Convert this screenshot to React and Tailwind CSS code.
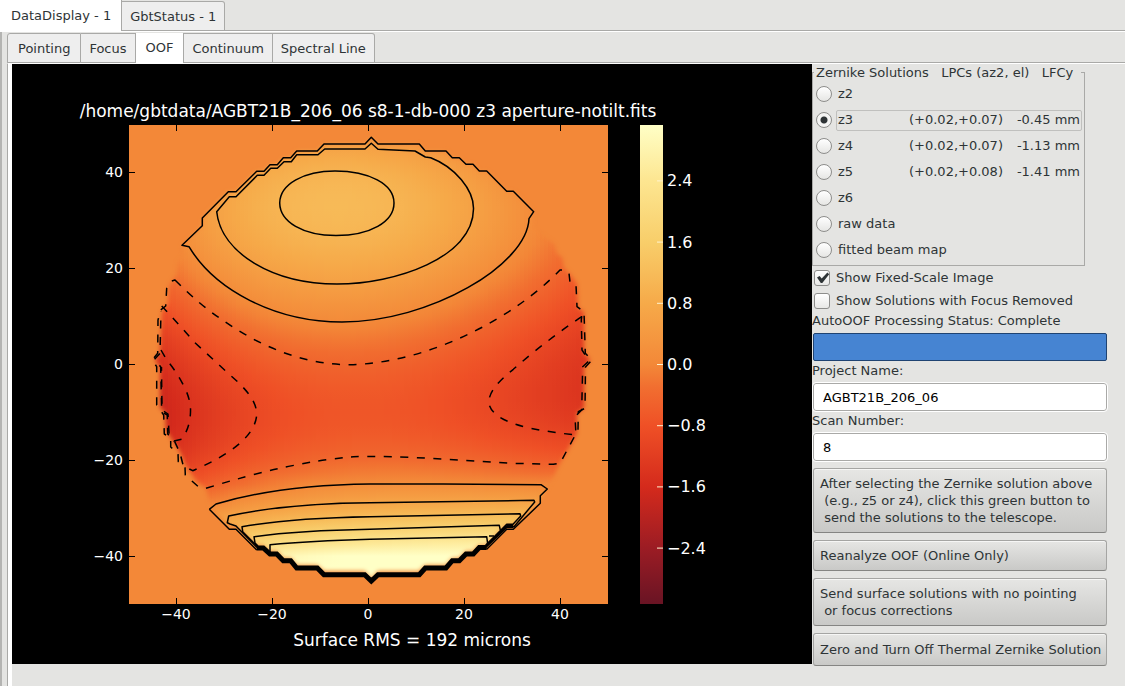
import React, { useState } from 'react';
import { clsx } from 'clsx';

const MAIN_TABS = ['DataDisplay - 1', 'GbtStatus - 1'];
const SUB_TABS = ['Pointing', 'Focus', 'OOF', 'Continuum', 'Spectral Line'];

const SOLUTIONS = [
  { id: 'z2' },
  { id: 'z3', lpc: '(+0.02,+0.07)', lfc: '-0.45 mm' },
  { id: 'z4', lpc: '(+0.02,+0.07)', lfc: '-1.13 mm' },
  { id: 'z5', lpc: '(+0.02,+0.08)', lfc: '-1.41 mm' },
  { id: 'z6' },
  { id: 'raw data' },
  { id: 'fitted beam map' }
];

const COLOR_MAP = [
  [-3.12, [105, 20, 36]],
  [-2.4, [155, 28, 36]],
  [-1.6, [212, 42, 28]],
  [-0.8, [239, 80, 38]],
  [-0.3, [241, 110, 48]],
  [0, [243, 136, 56]],
  [0.8, [246, 170, 73]],
  [1.6, [248, 206, 106]],
  [2.4, [253, 230, 145]],
  [3.12, [255, 255, 198]]
];

const X_TICKS = [-40, -20, 0, 20, 40];
const Y_TICKS = [-40, -20, 0, 20, 40];
const BAR_TICKS = [2.4, 1.6, 0.8, 0, -0.8, -1.6, -2.4];

const toX = (x) => 368 + x * 4.8;
const toY = (y) => 364 - y * 4.8;
const barY = (v) => 364 - v * 76.5;

const tickLabel = (v, digits) => `${v < 0 ? '−' : ''}${Math.abs(v).toFixed(digits)}`;

const colorFor = (value) => {
  const last = COLOR_MAP[COLOR_MAP.length - 1];
  if (value <= COLOR_MAP[0][0]) return `rgb(${COLOR_MAP[0][1].join(',')})`;
  if (value >= last[0]) return `rgb(${last[1].join(',')})`;
  const i = COLOR_MAP.findIndex(([stop]) => stop > value);
  const [v0, c0] = COLOR_MAP[i - 1];
  const [v1, c1] = COLOR_MAP[i];
  const k = (value - v0) / (v1 - v0);
  return `rgb(${c0.map((c, n) => Math.round(c + (c1[n] - c) * k)).join(',')})`;
};

// Third order surface, x and y in metres on the dish
const surface = (x, y) => {
  const s = x / 10;
  const t = y / 10;
  return (
    -0.45 - 0.137 * (t ** 3 / 3 - 1.15 * t ** 2 - 3.3 * t) +
    s * (-0.0435 - 0.028 * t + 0.0035 * t ** 2) +
    s ** 2 * (-0.0505 - 0.0063 * t) +
    0.0035 * s ** 3
  );
};

const COLUMN_WIDTH = 4;
const columns = [];
for (let px = 148; px < 596; px += COLUMN_WIDTH) {
  const stops = [];
  for (let py = 136; py <= 580; py += 12) {
    stops.push(colorFor(surface((px + COLUMN_WIDTH / 2 - 368) / 4.8, (364 - py) / 4.8)));
  }
  columns.push({ px, stops });
}

const RIM_TOP =
  '202.3,225.7 202.3,218 228.3,191.7 236,191.7 256.7,171.3 264,171.3 270,164.7 277.3,164.7 283.3,157.7 290.7,157.7 296.7,151 317.3,151 324,144 365,144 371.3,137.3 378,144 419.3,144 425.3,151 446,151 452.3,157.7 459.3,157.7 466,164.3 473,164.3 479.3,171 486.7,171 506.7,191.3 513.3,191.3 533.7,211.7';

const APERTURE = `M182,245 ${RIM_TOP} 534,228 545,238 554,244 557,254 562,257 564,268 570,274 577,284 578,308 584,312 584,353 590,360 584,367 584,408 577,413 577,433 570,446 560,463 554,476 546,489 539,502 513,525 506,525 486,545 479,545 473,551 466,551 459,558 452,558 446,565 425,565 419,571 378,571 371.3,579 364.7,571 324,571 317,565 296.7,565 290.7,558 283,558 277,551 270,551 263,545 256.7,545 236,525 229,525 211,508 206,488 197,482 186,466 180,452 171,438 166,430 165,412 160,408 160,367 155,360 160,353 162,312 168,304 169,286 177,274 178,262 184,256Z`;

const SOLID = [
  `M182,245.3 ${RIM_TOP} L529,218.7 C527,265 430,322 342,322 C275,322 215,290 189,246.7 Z`,
  'M216.7,211.7 L229.3,196.7 236,196.7 257.3,175.3 264,175.3 270.7,168.3 277.3,168.3 284,161.7 291.3,161.7 296.7,154.7 318,154.7 324.7,149 365,149 371.3,143.3 378,149.3 415,151 425.3,157 430.7,157.7 C455,167 474,190 473.5,209 C473,258 395,284 337,284 C273,284 221,253 216.7,211.7Z',
  'M279.7,203 C280,184 304,171 335,171 C369,171 394,184 394,203 C394,222 370,235.5 336,235.5 C303,235.5 280,222 279.7,203Z',
  'M209.3,509.3 L216,504 Q280,485 370,484 L443,484 541,484.7 547.3,489 540.3,495.7 540.3,503.3 513.3,529.3 506.7,529.3 486.7,549.3 M209.3,509.3 L229.3,529.3 236,529.3 256.7,550',
  'M257,547.5 L236,526 230,524 227.3,522.7 228.7,516 Q290,503 370,502.7 L534,500.3 534.7,502 514,526.7 506.7,526.7 486,547',
  'M258,547 L242.7,531.7 242,526.7 Q290,518 370,516.7 L520,513.7 520.7,516 513,524.3 506.7,524.3 486,545',
  'M258,546 L255,543 254,536.7 Q300,530.5 370,529.3 L499.3,525.3 500.3,530',
  'M270,552 L270,544.7 Q310,541 370,539.3 L486.7,536.7 487.7,544'
];

const DASHED = [
  'M175,280 Q200,305 220,318.3 C260,347 305,365 350,364.7 C430,363 515,317 560,270 L565,270 569,273.3 570,282 576,285 577,306.7 584,311.7 585.3,353.3 592,360 585.5,367 585,408.3 578.3,411.7 578,430 560,463.3 553.3,464.3 510,463.3 460,460 410,457.3 Q376,456 353.3,456.7 Q290,462 206,488.3 L198.3,486.7 185.3,475 185,467 178.3,461.7 178,453 170.7,447 170.7,438 164.3,434 163.7,415 156.7,405 156.7,366.7 152.3,360 157.7,353.3 158,320 160.7,310 165.7,306 166.7,288.3 171.7,281Z',
  'M161.7,306 Q175,320 195,342.7 L230,375 C250,392 257,404 256.7,415 C255,438 225,457 192.7,470.7 L183.3,466 180,453 174,440 167.7,434 167.3,415 161.7,411.7 160.7,366.7 154,360 160,353.3 161,311.7',
  'M161,350 L166.7,360 Q177,372 185,388.3 Q191,401 190.5,412 Q190,428 181.7,439.3 L174,441 169,433 168,414 162,410 161.5,367',
  'M581.7,316.7 Q560,331 530,355 L513.3,369.3 Q487,390 489,404 C494,423 530,430 576,435 L575,416.7 581.7,410 582.7,366.7 589,361 582,350 581.3,320Z'
];

const RIM_BOTTOM =
  '256.7,548 263.3,548 270,554 276.7,554 283.3,560.7 290.7,560.7 296.7,568 317.3,568 324,574.7 364.7,574.7 371.3,581 378,574.7 419.3,574.7 425.3,568 446,568 452.3,560.7 459.3,560.7 466,554 473.3,554 479.3,547.5 486.7,547.5';

const AperturePlot = () => (
  <svg
    viewBox="12 64 800 600"
    role="img"
    aria-label="Aperture surface map"
    className="block w-full h-auto bg-black font-['DejaVu_Sans',sans-serif]"
  >
    <defs>
      {columns.map(({ px, stops }) => (
        <linearGradient key={px} id={`col-${px}`} gradientUnits="userSpaceOnUse" x1="0" x2="0" y1="136" y2="580">
          {stops.map((color, i) => (
            <stop key={i} offset={i / (stops.length - 1)} stopColor={color} />
          ))}
        </linearGradient>
      ))}
      <linearGradient id="color-bar" x1="0" x2="0" y1="1" y2="0">
        {COLOR_MAP.map(([v]) => (
          <stop key={v} offset={(v + 3.12) / 6.24} stopColor={colorFor(v)} />
        ))}
      </linearGradient>
      <filter id="soft-edge" x="-5%" y="-5%" width="110%" height="110%">
        <feGaussianBlur stdDeviation="2" />
      </filter>
      <mask id="aperture" maskUnits="userSpaceOnUse" x="129" y="125" width="479" height="479">
        <path d={APERTURE} fill="white" filter="url(#soft-edge)" />
      </mask>
    </defs>

    <text x="368" y="117" textAnchor="middle" fontSize="17" fill="white">
      /home/gbtdata/AGBT21B_206_06 s8-1-db-000 z3 aperture-notilt.fits
    </text>

    {/* Heat map */}
    <rect x="129" y="125" width="479" height="479" fill="#f38838" />
    <g mask="url(#aperture)">
      {columns.map(({ px }) => (
        <rect key={px} x={px} y="130" width={COLUMN_WIDTH + 1} height="460" fill={`url(#col-${px})`} />
      ))}
    </g>

    {/* Contours */}
    <g fill="none" stroke="black" strokeWidth="1.5" strokeLinejoin="round">
      {SOLID.map((d) => <path key={d} d={d} />)}
      {DASHED.map((d) => <path key={d} d={d} strokeDasharray="8 8.5" />)}
      <path d="M489,536 H494" />
      <polyline points={RIM_BOTTOM} strokeWidth="5" strokeLinejoin="miter" />
      <path d="M485,547 L506.7,526.5 H513.3" strokeWidth="3" />
    </g>

    {/* Axes */}
    <g stroke="black" strokeWidth="1" fill="white" fontSize="14">
      {X_TICKS.map((v) => (
        <g key={v}>
          <path d={`M${toX(v) + 0.5},125 v6 M${toX(v) + 0.5},604 v-6`} />
          <text x={toX(v)} y="619" textAnchor="middle" stroke="none">{tickLabel(v, 0)}</text>
        </g>
      ))}
      {Y_TICKS.map((v) => (
        <g key={v}>
          <path d={`M129,${toY(v) + 0.5} h6 M608,${toY(v) + 0.5} h-6`} />
          <text x="123" y={toY(v) + 5} textAnchor="end" stroke="none">{tickLabel(v, 0)}</text>
        </g>
      ))}
    </g>
    <text x="412" y="646" textAnchor="middle" fontSize="17" fill="white">Surface RMS = 192 microns</text>

    {/* Color bar */}
    <rect x="640" y="125" width="23" height="479" fill="url(#color-bar)" />
    {BAR_TICKS.map((v) => (
      <g key={v}>
        <path d={`M657,${barY(v) + 0.5} h6`} stroke="#fff3cf" strokeWidth="1" />
        <text x="667" y={barY(v) + 6} fontSize="16" fill="white">{tickLabel(v, 1)}</text>
      </g>
    ))}
  </svg>
);

const ActionButton = ({ className, children }) => (
  <button
    type="button"
    className={clsx(
      'w-full rounded-[3px] border border-[#a5a5a3] border-b-[#858583] bg-gradient-to-b from-[#e6e6e4] to-[#c9c9c7] px-[6px] text-left leading-[17px] whitespace-pre shadow-[inset_0_1px_0_#f6f6f5]',
      className
    )}
  >
    {children}
  </button>
);

const TextField = ({ id, label, value, onChange }) => (
  <div>
    <label htmlFor={id} className="block leading-5">{label}</label>
    <input
      id={id}
      type="text"
      value={value}
      onChange={(e) => onChange(e.target.value)}
      className="mt-0.5 ml-px block h-7 w-[294px] rounded-[3px] border border-[#a9a9a7] bg-white px-[9px] text-black outline-1 outline-white"
    />
  </div>
);

const CheckBox = ({ label, checked, onChange }) => (
  <label className="flex h-[23px] items-center gap-1.5 pl-0.5">
    <span className="relative flex">
      <input
        type="checkbox"
        checked={checked}
        onChange={onChange}
        className="size-4 appearance-none rounded-[3px] border border-[#8d8d8b] bg-gradient-to-b from-white to-[#e8e8e6]"
      />
      {checked && (
        <svg viewBox="0 0 16 16" className="pointer-events-none absolute inset-0 size-4" fill="#2e3436">
          <path d="M3 7.4 5.6 6 7.7 8.6 13.4 2.6 15.2 4.2 8.3 13H6.8Z" />
        </svg>
      )}
    </span>
    {label}
  </label>
);

const App = () => {
  const [mainTab, setMainTab] = useState('DataDisplay - 1');
  const [subTab, setSubTab] = useState('OOF');
  const [solution, setSolution] = useState('z3');
  const [fixedScale, setFixedScale] = useState(true);
  const [focusRemoved, setFocusRemoved] = useState(false);
  const [project, setProject] = useState('AGBT21B_206_06');
  const [scan, setScan] = useState('8');

  return (
    <div className="flex min-h-screen flex-col bg-[#e4e4e2] font-['DejaVu_Sans',sans-serif] text-[13px] text-[#2e3436]">
      {/* Main tabs */}
      <div role="tablist" className="flex h-8 items-end border-b border-white bg-[linear-gradient(to_top,#a9a9a7_1px,transparent_1px)]">
        {MAIN_TABS.map((tab) => (
          <button
            key={tab}
            type="button"
            role="tab"
            aria-selected={tab === mainTab}
            onClick={() => setMainTab(tab)}
            className={clsx(
              'border-[#a9a9a7]',
              tab === mainTab ? 'h-full border-r bg-white pr-[10px] pl-[11px]' : 'h-[30px] rounded-tr-[3px] border-t border-r border-b bg-[#eeeeee] px-2 pt-0.5'
            )}
          >
            {tab}
          </button>
        ))}
      </div>

      <div className="flex flex-1 flex-col border-l-2 border-[#b4b4b2] pl-[5px]">
        {/* Sub tabs */}
        <div role="tablist" className="flex h-[31px] items-end bg-[linear-gradient(to_top,#a9a9a7_1px,transparent_1px)] pt-px">
          {SUB_TABS.map((tab) => (
            <button
              key={tab}
              type="button"
              role="tab"
              aria-selected={tab === subTab}
              onClick={() => setSubTab(tab)}
              className={clsx(
                'border-[#a9a9a7] first:rounded-tl-[3px] first:border-l first:px-[10px] last:rounded-tr-[3px]',
                tab === subTab ? 'h-full border-r bg-white px-[10px]' : 'h-[30px] border-t border-r border-b bg-[#eeeeee] px-2 pt-0.5'
              )}
            >
              {tab}
            </button>
          ))}
        </div>

        <div className="flex flex-1 border-t border-l border-t-white border-l-[#a9a9a7]">
          <div className="min-w-0 flex-1 border-l-4 border-white">
            <AperturePlot />
          </div>

          {/* Control panel */}
          <div className="w-[313px] shrink-0">
            <fieldset className="w-[273px] border border-[#a9a9a7] pr-0.5 pb-0.5">
              <legend className="ml-px h-[17px] w-[267px] pl-0.5 leading-[17px] whitespace-pre">
                {'Zernike Solutions   LPCs (az2, el)   LFCy'}
              </legend>
              {SOLUTIONS.map(({ id, lpc, lfc }) => (
                <label key={id} className="flex h-[26px] items-center gap-1 pl-[3px]">
                  <input
                    type="radio"
                    name="solution"
                    checked={solution === id}
                    onChange={() => setSolution(id)}
                    className="size-4 shrink-0 appearance-none rounded-full border border-[#8d8d8b] bg-gradient-to-b from-white to-[#e6e6e4] checked:bg-[radial-gradient(circle,#2e3436_3px,#f4f4f3_4px)]"
                  />
                  <span
                    className={clsx(
                      'flex h-[21px] flex-1 items-center rounded-[2px] border px-px',
                      solution === id ? 'border-[#c0c0be]' : 'border-transparent'
                    )}
                  >
                    <span className={lpc ? 'w-[71px]' : ''}>{id}</span>
                    <span>{lpc}</span>
                    <span className="ml-auto">{lfc}</span>
                  </span>
                </label>
              ))}
            </fieldset>

            <CheckBox
              label="Show Fixed-Scale Image"
              checked={fixedScale}
              onChange={() => setFixedScale(!fixedScale)}
            />
            <CheckBox
              label="Show Solutions with Focus Removed"
              checked={focusRemoved}
              onChange={() => setFocusRemoved(!focusRemoved)}
            />

            <p id="status" className="leading-[18px]">AutoOOF Processing Status: Complete</p>
            <div
              role="progressbar"
              aria-labelledby="status"
              aria-valuenow={100}
              className="mt-[3px] ml-px h-7 w-[294px] rounded-[2px] border border-[#1f4372] bg-[#4684d2]"
            />

            <TextField id="project" label="Project Name:" value={project} onChange={setProject} />
            <TextField id="scan" label="Scan Number:" value={scan} onChange={setScan} />

            <div className="mt-[7px] ml-px flex w-[294px] flex-col gap-[7px]">
              <ActionButton className="py-[6px]">
                {'After selecting the Zernike solution above\n (e.g., z5 or z4), click this green button to\n send the solutions to the telescope.'}
              </ActionButton>
              <ActionButton className="py-[6px]">Reanalyze OOF (Online Only)</ActionButton>
              <ActionButton className="py-[6px]">
                {'Send surface solutions with no pointing\n or focus corrections'}
              </ActionButton>
              <ActionButton className="py-[7px]">Zero and Turn Off Thermal Zernike Solution</ActionButton>
            </div>
          </div>
        </div>
      </div>
    </div>
  );
};

export default App;
